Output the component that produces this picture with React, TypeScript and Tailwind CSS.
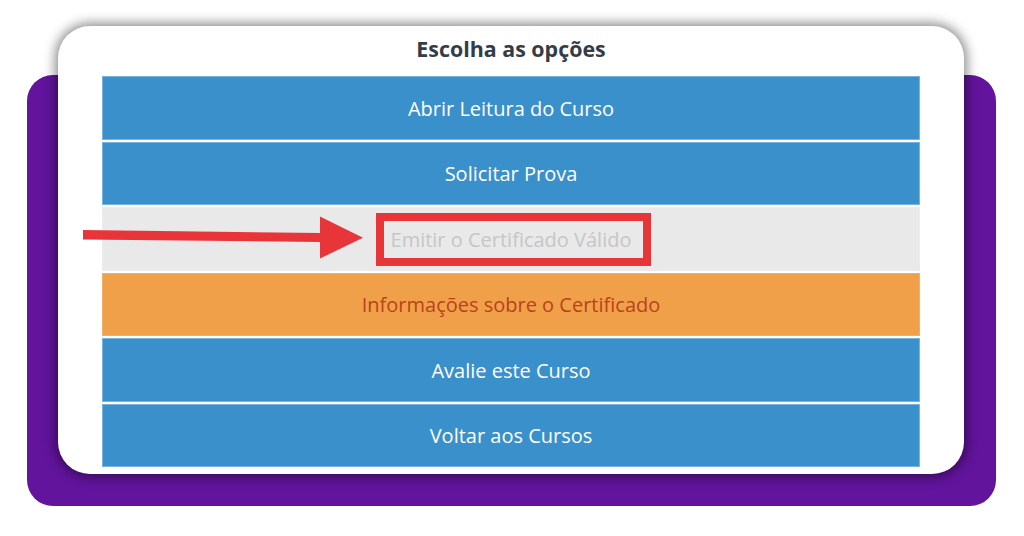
import React from "react";

const rows: { label: string; cls: string }[] = [
  { label: "Abrir Leitura do Curso", cls: "bg-[#3a90ca] text-white border-[#78b4df]" },
  { label: "Solicitar Prova", cls: "bg-[#3a90ca] text-white border-[#78b4df]" },
  { label: "Emitir o Certificado Válido", cls: "bg-[#e9e9e9] text-[#c6c6c6] border-[#ececec]" },
  { label: "Informações sobre o Certificado", cls: "bg-[#f1a04a] text-[#b9431b] border-[#f3b06a]" },
  { label: "Avalie este Curso", cls: "bg-[#3a90ca] text-white border-[#78b4df]" },
  { label: "Voltar aos Cursos", cls: "bg-[#3a90ca] text-white border-[#78b4df]" },
];

export default function App() {
  return (
    <div
      className="relative w-[1024px] h-[536px] bg-white overflow-hidden"
      style={{ fontFamily: '"Open Sans", "Noto Sans", sans-serif' }}
    >
      <div className="ml-[27px] mt-[75px] w-[969px] h-[431px] rounded-[26px] bg-[#62149d]" />

      <div className="absolute left-[58px] top-[26px] w-[906px] h-[448px] rounded-[32px] bg-white shadow-[0_0_12px_3px_rgba(0,0,0,0.45)] flex flex-col px-[44px] pb-[7px]">
        <div className="h-[50px] flex items-center justify-center pb-[4px] text-[21.4px] font-bold text-[#333c48]">
          Escolha as opções
        </div>
        <div className="flex flex-col gap-[2px]">
          {rows.map((r) => (
            <div
              key={r.label}
              className={`h-[63.5px] border flex items-center justify-center pt-[2px] text-[20px] ${r.cls}`}
            >
              {r.label}
            </div>
          ))}
        </div>
      </div>

      <svg
        className="absolute left-[80px] top-[212px]"
        width="290"
        height="52"
        viewBox="0 0 290 52"
      >
        <polygon points="3,18 241,21 241,30 3,27.5" fill="#e8353a" />
        <polygon points="240,4.5 283,25.7 240,46.5" fill="#e8353a" />
      </svg>

      <div className="absolute left-[376px] top-[213px] w-[275px] h-[53px] border-[8px] border-[#e8353a]" />
    </div>
  );
}
